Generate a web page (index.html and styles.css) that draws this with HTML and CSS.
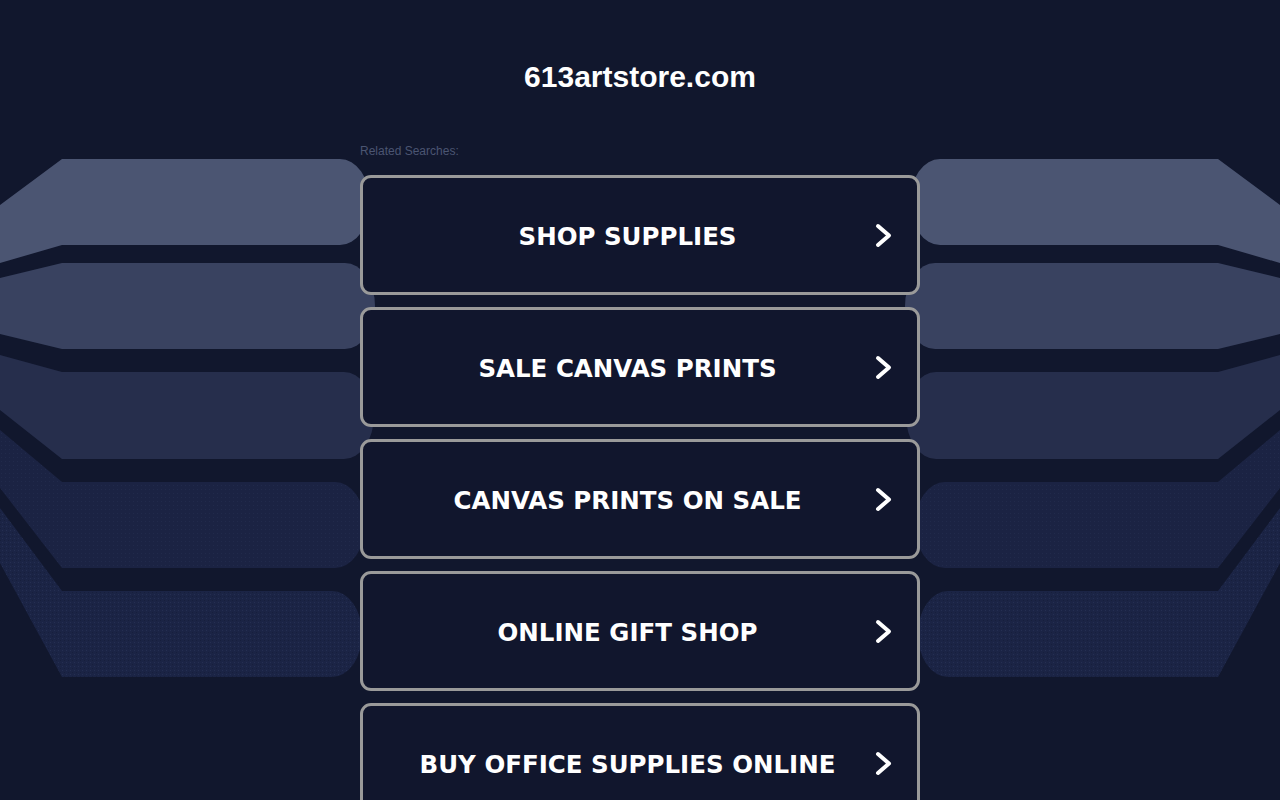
FILE: index.html
```html
<!DOCTYPE html>
<html lang="en">
<head>
<meta charset="utf-8">
<title>613artstore.com</title>
<link rel="stylesheet" href="styles.css">
</head>
<body>
<svg class="backdrop" width="1280" height="800" viewBox="0 0 1280 800" aria-hidden="true">
  <defs>
    <pattern id="dots4" width="4" height="4" patternUnits="userSpaceOnUse">
      <rect width="4" height="4" fill="#1b2343"/>
      <rect x="1" y="1" width="1" height="1" fill="#212a4b"/>
    </pattern>
    <pattern id="dots5" width="4" height="4" patternUnits="userSpaceOnUse">
      <rect width="4" height="4" fill="#1b2445"/>
      <rect x="2" y="2" width="1" height="1" fill="#252f52"/>
      <rect x="0" y="0" width="1" height="1" fill="#171f3c"/>
    </pattern>
    <g id="bands">
      <path d="M0,205 L62,159 L340,159 A30,43 0 0 1 340,245 L62,245 L0,263 Z" fill="#4b5572"/>
      <path d="M0,278 L62,263 L345,263 A30,43 0 0 1 345,349 L62,349 L0,334 Z" fill="#394260"/>
      <path d="M0,355 L62,372 L344,372 A30,43.5 0 0 1 344,459 L62,459 L0,410 Z" fill="#262e4c"/>
      <path d="M0,430 L62,482 L335,482 A30,43 0 0 1 335,568 L62,568 L0,488 Z" fill="url(#dots4)"/>
      <path d="M0,508 L62,591 L332,591 A30,43 0 0 1 332,677 L62,677 L0,563 Z" fill="url(#dots5)"/>
    </g>
  </defs>
  <use href="#bands"/>
  <use href="#bands" transform="matrix(-1 0 0 1 1280 0)"/>
</svg>

<main class="page">
  <h1 class="title">613artstore.com</h1>
  <p class="related">Related Searches:</p>
  <ul class="links">
    <li><a class="link" href="#"><span class="label">SHOP SUPPLIES</span><svg class="chev" width="17" height="25" viewBox="0 0 17 25"><polyline points="3,3 14,12.5 3,22"/></svg></a></li>
    <li><a class="link" href="#"><span class="label">SALE CANVAS PRINTS</span><svg class="chev" width="17" height="25" viewBox="0 0 17 25"><polyline points="3,3 14,12.5 3,22"/></svg></a></li>
    <li><a class="link" href="#"><span class="label">CANVAS PRINTS ON SALE</span><svg class="chev" width="17" height="25" viewBox="0 0 17 25"><polyline points="3,3 14,12.5 3,22"/></svg></a></li>
    <li><a class="link" href="#"><span class="label">ONLINE GIFT SHOP</span><svg class="chev" width="17" height="25" viewBox="0 0 17 25"><polyline points="3,3 14,12.5 3,22"/></svg></a></li>
    <li><a class="link" href="#"><span class="label">BUY OFFICE SUPPLIES ONLINE</span><svg class="chev" width="17" height="25" viewBox="0 0 17 25"><polyline points="3,3 14,12.5 3,22"/></svg></a></li>
  </ul>
</main>
</body>
</html>
```

FILE: styles.css
```css
html, body {
  margin: 0;
  padding: 0;
  background: #11172d;
  overflow: hidden;
  height: 800px;
}

body {
  position: relative;
  font-family: "Liberation Sans", Arial, sans-serif;
  color: #ffffff;
}

.backdrop {
  position: absolute;
  left: 0;
  top: 0;
  z-index: 0;
}

.page {
  position: relative;
  z-index: 1;
  width: 560px;
  margin: 0 auto;
  padding-top: 59px;
}

.title {
  margin: 0;
  font-family: "Liberation Sans", Arial, sans-serif;
  font-weight: bold;
  font-size: 30px;
  line-height: 36px;
  text-align: center;
  color: #ffffff;
}

.related {
  margin: 49px 0 0 0;
  font-size: 12px;
  line-height: 14px;
  color: #4b5572;
}

.links {
  list-style: none;
  margin: 17px 0 0 0;
  padding: 0;
  display: flex;
  flex-direction: column;
  gap: 12px;
}

.link {
  box-sizing: border-box;
  height: 120px;
  display: flex;
  align-items: center;
  padding-right: 25px;
  border: 3px solid #9a9a9a;
  border-radius: 11px;
  background: #11162d;
  color: #ffffff;
  text-decoration: none;
}

.label {
  flex: 1;
  text-align: center;
  font-family: "DejaVu Sans", Verdana, sans-serif;
  font-weight: bold;
  font-size: 24.5px;
  line-height: 30px;
  padding-top: 4px;
}

.chev {
  flex: none;
  margin-left: -17px;
  fill: none;
  stroke: #ffffff;
  stroke-width: 4;
  stroke-linecap: round;
  stroke-linejoin: round;
}
```
